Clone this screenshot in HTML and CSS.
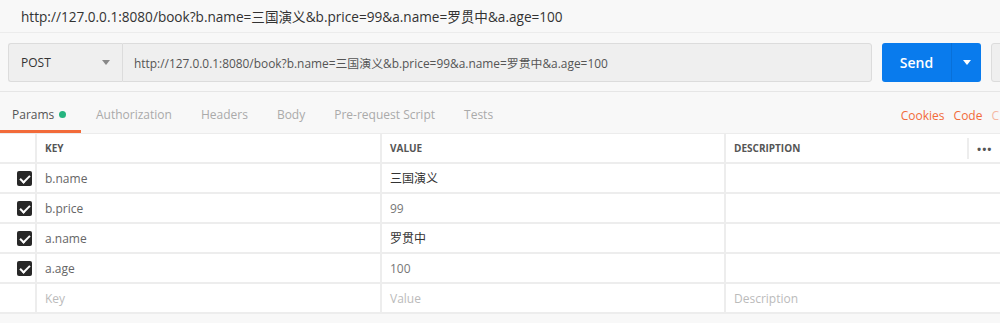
FILE: index.html
```html
<!DOCTYPE html>
<html>
<head>
  <meta charset="utf-8">
  <title>Request</title>
  <link rel="stylesheet" href="styles.css">
</head>
<body>
  <div class="tab-title">http://127.0.0.1:8080/book?b.name=三国演义&amp;b.price=99&amp;a.name=罗贯中&amp;a.age=100</div>

  <div class="request">
    <div class="method">
      <span>POST</span>
      <span class="caret"></span>
    </div>
    <div class="url">http://127.0.0.1:8080/book?b.name=三国演义&amp;b.price=99&amp;a.name=罗贯中&amp;a.age=100</div>
    <div class="send">
      <span class="send-label">Send</span>
      <span class="send-more"><span class="caret white"></span></span>
    </div>
    <div class="save"></div>
  </div>

  <div class="tabs">
    <div class="tab active">Params <span class="dot"></span></div>
    <div class="tab">Authorization</div>
    <div class="tab">Headers</div>
    <div class="tab">Body</div>
    <div class="tab">Pre-request Script</div>
    <div class="tab">Tests</div>
    <div class="tabs-right">
      <span>Cookies</span>
      <span>Code</span>
      <span>C</span>
    </div>
  </div>

  <div class="params">
    <div class="row head">
      <div class="cell check"></div>
      <div class="cell">KEY</div>
      <div class="cell">VALUE</div>
      <div class="cell desc">DESCRIPTION</div>
      <div class="cell more">&bull;&bull;&bull;</div>
    </div>
    <div class="row">
      <div class="cell check"><span class="box"></span></div>
      <div class="cell key">b.name</div>
      <div class="cell value dark">三国演义</div>
      <div class="cell desc wide"></div>
    </div>
    <div class="row">
      <div class="cell check"><span class="box"></span></div>
      <div class="cell key">b.price</div>
      <div class="cell value">99</div>
      <div class="cell desc wide"></div>
    </div>
    <div class="row">
      <div class="cell check"><span class="box"></span></div>
      <div class="cell key">a.name</div>
      <div class="cell value dark">罗贯中</div>
      <div class="cell desc wide"></div>
    </div>
    <div class="row">
      <div class="cell check"><span class="box"></span></div>
      <div class="cell key">a.age</div>
      <div class="cell value">100</div>
      <div class="cell desc wide"></div>
    </div>
    <div class="row">
      <div class="cell check"></div>
      <div class="cell placeholder">Key</div>
      <div class="cell placeholder">Value</div>
      <div class="cell placeholder desc wide">Description</div>
    </div>
  </div>
</body>
</html>
```

FILE: styles.css
```css
body {
  margin: 0;
  background: #f8f8f8;
  font-family: 'Open Sans', 'Noto Sans CJK SC', sans-serif;
  color: #333;
  overflow: hidden;
}
.tab-title {
  height: 32px;
  line-height: 33px;
  padding-left: 21px;
  font-size: 13.6px;
  color: #333;
  border-bottom: 1px solid #ececec;
}
.request {
  display: flex;
  gap: 10px;
  padding: 10px 0 9px 8px;
  border-bottom: 1px solid #e6e6e6;
  height: 39px;
}
.method {
  width: 114px;
  flex-shrink: 0;
  display: flex;
  align-items: center;
  justify-content: space-between;
  padding: 0 12px 0 12px;
  box-sizing: border-box;
  background: #efefef;
  border: 1px solid #dcdcdc;
  border-right: none;
  border-radius: 3px 0 0 3px;
  font-size: 12px;
  color: #333;
  margin-right: -10px;
}
.caret {
  width: 0;
  height: 0;
  border-left: 4px solid transparent;
  border-right: 4px solid transparent;
  border-top: 5px solid #888;
}
.caret.white { border-top-color: #fff; }
.url {
  width: 750px;
  flex-shrink: 0;
  display: flex;
  align-items: center;
  padding-left: 11px;
  box-sizing: border-box;
  background: #efefef;
  border: 1px solid #dcdcdc;
  border-radius: 0 3px 3px 0;
  font-size: 11.9px;
  color: #555;
}
.send {
  width: 99px;
  display: flex;
  background: #097bed;
  border-radius: 3px;
  color: #fff;
  flex-shrink: 0;
}
.send-label {
  width: 69px;
  display: flex;
  align-items: center;
  justify-content: center;
  font-size: 14px;
  font-weight: 600;
  border-right: 1px solid #0870d9;
}
.send-more {
  flex: 1;
  display: flex;
  align-items: center;
  justify-content: center;
}
.save {
  width: 40px;
  background: #efefef;
  border: 1px solid #dcdcdc;
  border-radius: 3px;
  flex-shrink: 0;
}
.tabs {
  display: flex;
  height: 42px;
  box-sizing: border-box;
  align-items: stretch;
  border-bottom: 1px solid #ececec;
  font-size: 12px;
}
.tab {
  display: flex;
  align-items: center;
  padding: 6px 14px 0;
  margin-right: 1px;
  color: #aaa;
  border-bottom: 3px solid transparent;
}
.tab.active {
  color: #555;
  border-bottom-color: #f26b3a;
  width: 81px;
  box-sizing: border-box;
  padding-left: 12px;
}
.dot {
  width: 7px;
  height: 7px;
  border-radius: 50%;
  background: #26b47f;
  margin-left: 5px;
}
.tabs-right {
  margin-left: auto;
  display: flex;
  align-items: center;
  gap: 9px;
  color: #f26b3a;
  margin-right: 1px;
  padding-top: 5px;
  white-space: nowrap;
}
.tabs-right span:last-child { opacity: 0.45; }
.params {
  background: #fff;
}
.row {
  display: grid;
  grid-template-columns: 37px 345px 344px 241px 33px;
  height: 30px;
  border-bottom: 2px solid #ededed;
  box-sizing: border-box;
}
.cell {
  display: flex;
  align-items: center;
  padding-left: 8px;
  border-right: 2px solid #ededed;
  font-size: 12px;
  color: #666;
  overflow: hidden;
  white-space: nowrap;
}
.cell.desc { border-right: none; }
.cell.wide { grid-column: span 2; }
.cell.more {
  border-right: none;
  border-left: 2px solid #ededed;
  margin: 4px 0 3px;
  padding-left: 8px;
  letter-spacing: 1px;
  color: #777;
  font-size: 11px;
}
.head .cell {
  font-size: 10px;
  font-weight: 700;
  color: #555;
}
.head .cell.more { font-size: 11px; }
.cell.check {
  padding: 0 3px 0 0;
  justify-content: flex-end;
}
.box {
  width: 15px;
  height: 15px;
  border-radius: 2px;
  background: #282828;
  position: relative;
}
.box::after {
  content: '';
  position: absolute;
  left: 5px;
  top: 2px;
  width: 4px;
  height: 8px;
  border: solid #fff;
  border-width: 0 2px 2px 0;
  transform: rotate(45deg);
}
.value { color: #777; }
.value.dark { color: #333; }
.placeholder { color: #bbb; }
```
